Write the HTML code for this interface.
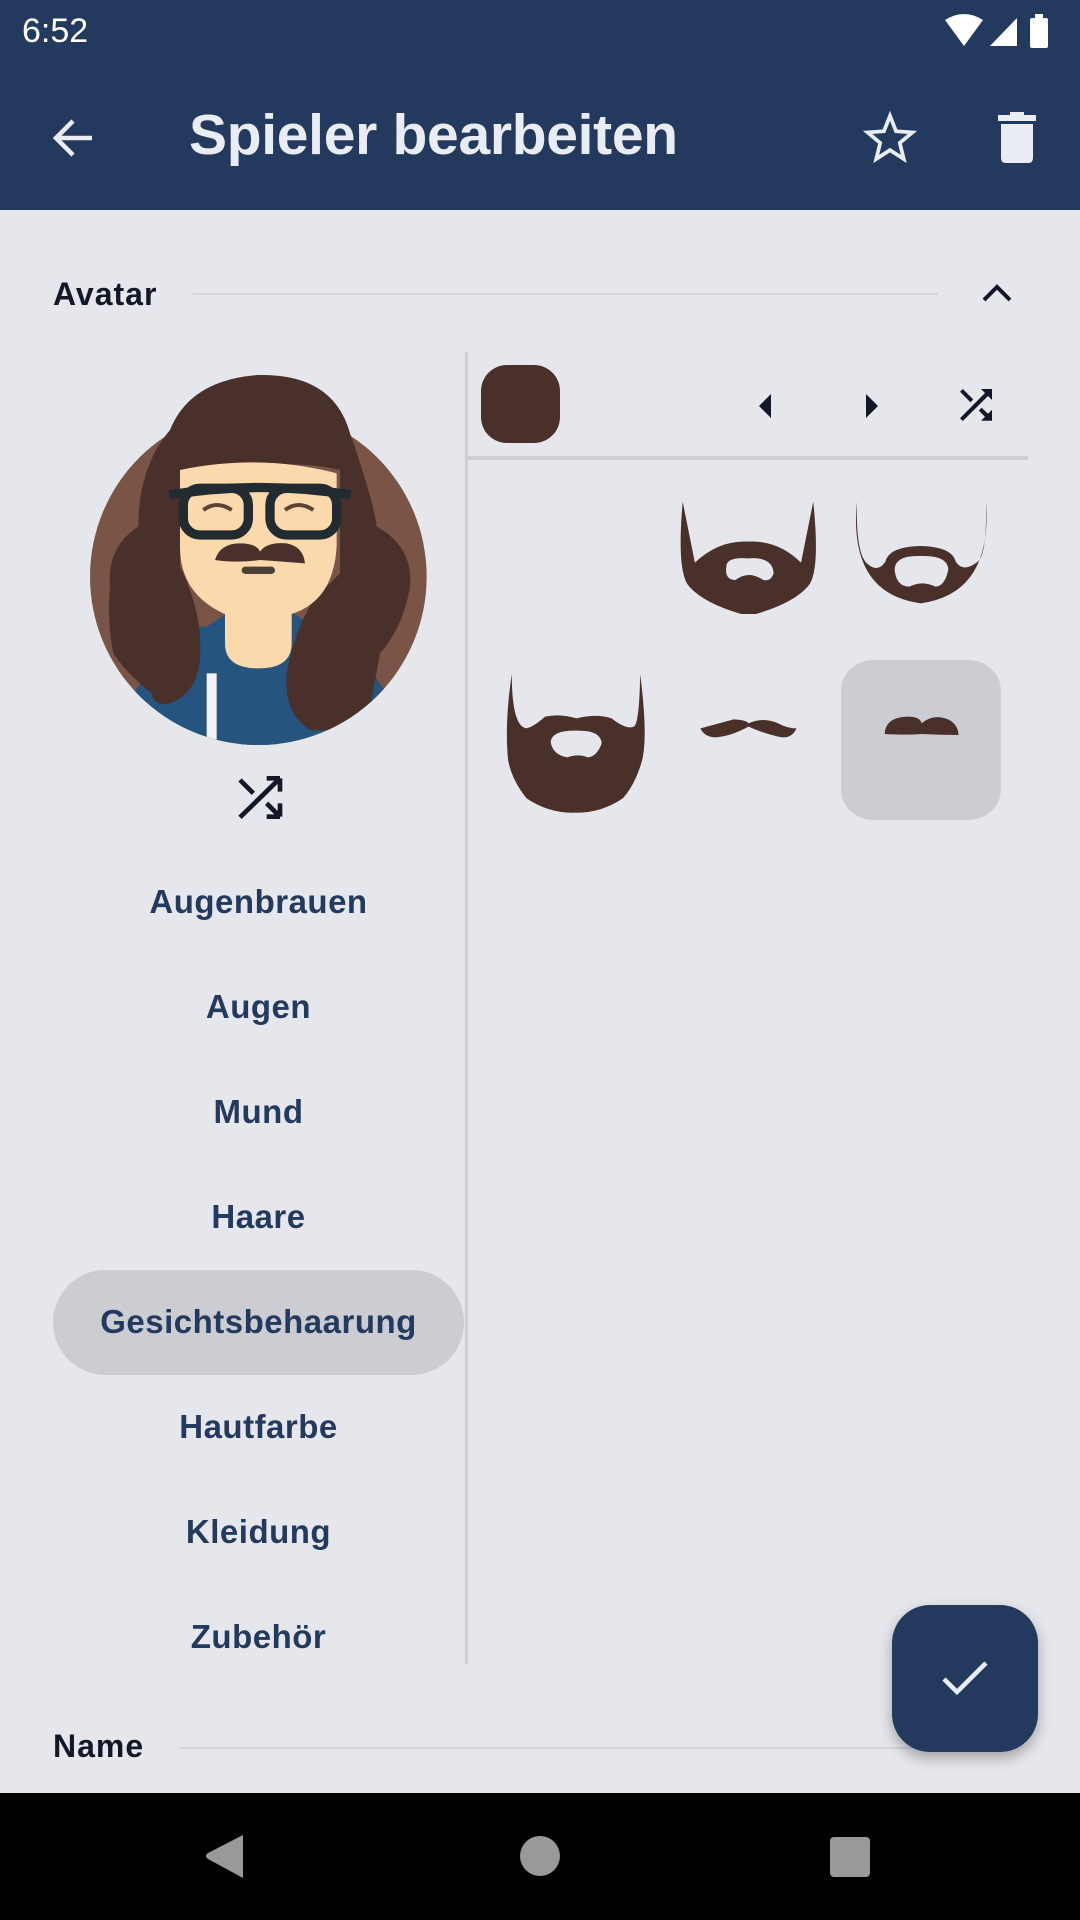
<!DOCTYPE html>
<html><head><meta charset="utf-8"><style>
*{margin:0;padding:0;box-sizing:border-box}
body{width:1080px;height:1920px;background:#e5e7ec;position:relative;overflow:hidden;font-family:"Liberation Sans",sans-serif}
.abs{position:absolute}
.item{position:absolute;left:53px;width:411px;text-align:center;font-weight:bold;font-size:33px;color:#233a5e;line-height:40px;letter-spacing:0.5px}
</style></head><body>
<div class="abs" style="left:0;top:0;width:1080px;height:210px;background:#233a5e"></div>
<div class="abs" style="left:22px;top:12px;font-size:34px;color:#fff;">6:52</div>
<svg class="abs" style="left:940px;top:12px" width="125" height="40" viewBox="0 0 125 40">
<path d="M5 8 Q24 -4 43 8 L24 34 Z" fill="#fff"/>
<path d="M50 34 L77 6 L77 34 Z" fill="#fff"/>
<rect x="90" y="6" width="18" height="30" rx="2" fill="#fff"/><rect x="95" y="2" width="8" height="5" fill="#fff"/>
</svg>
<svg class="abs" style="left:50px;top:115px" width="46" height="46" viewBox="0 0 46 46"><path d="M42 23H8M23 6L6 23l17 17" stroke="#e9ecf2" stroke-width="4.5" fill="none"/></svg>
<div class="abs" style="left:189px;top:100px;font-size:57px;font-weight:bold;color:#e9ecf2;letter-spacing:-0.3px;line-height:70px">Spieler bearbeiten</div>
<svg class="abs" style="left:862px;top:110px" width="56" height="56" viewBox="0 0 24 24"><path d="M12 2.5l2.6 6.6 7 .5-5.4 4.5 1.7 6.9L12 17.2 6.1 21l1.7-6.9L2.4 9.6l7-.5z" fill="none" stroke="#e9ecf2" stroke-width="1.6"/></svg>
<svg class="abs" style="left:995px;top:112px" width="44" height="52" viewBox="0 0 44 52"><rect x="3" y="3" width="38" height="6" fill="#e9ecf2"/><rect x="15" y="0" width="14" height="5" fill="#e9ecf2"/><path d="M6 12h32v34q0 5-5 5H11q-5 0-5-5z" fill="#e9ecf2"/></svg>

<div class="abs" style="left:53px;top:276px;font-size:32px;font-weight:bold;color:#111827;letter-spacing:1px">Avatar</div>
<div class="abs" style="left:193px;top:293px;width:745px;height:2px;background:#d4d6db"></div>
<svg class="abs" style="left:980px;top:280px" width="34" height="24" viewBox="0 0 34 24"><path d="M4 20L17 7l13 13" stroke="#111827" stroke-width="4" fill="none"/></svg>

<div class="abs" style="left:465px;top:352px;width:3px;height:1312px;background:#cdcfd4"></div>
<div class="abs" style="left:467px;top:456px;width:561px;height:4px;background:#cdcfd4"></div>
<div class="abs" style="left:481px;top:365px;width:79px;height:78px;border-radius:26px;background:#4a302b"></div>
<svg class="abs" style="left:755px;top:392px" width="20" height="28"><path d="M16 2L4 14l12 12z" fill="#111827"/></svg>
<svg class="abs" style="left:862px;top:392px" width="20" height="28"><path d="M4 2l12 12L4 26z" fill="#111827"/></svg>
<svg class="abs" style="left:952px;top:381px" width="48" height="48" viewBox="0 0 24 24"><path d="M10.6 9.2L5.4 4 4 5.4l5.2 5.2zM14.5 4l2 2L4 18.6 5.4 20 18 7.5l2 2V4zm.3 9.4l-1.4 1.4 3.1 3.1-2 2H20v-5.5l-2 2z" fill="#111827"/></svg>

<svg class="abs" style="left:460px;top:340px" width="580" height="500" viewBox="0 0 1568 1500" preserveAspectRatio="none">
<rect x="1030" y="960" width="432" height="480" rx="90" fill="#cbcdd2"/>
<g fill="#4a302b">
<path fill-rule="evenodd" d="M602 485L635 668Q700 600 780 605Q860 600 922 668L955 485Q975 700 940 740Q900 790 800 822L760 822Q660 790 620 740Q585 700 602 485ZM720 680Q720 650 780 655Q845 650 848 700Q840 725 820 720Q780 690 745 720Q715 720 720 680Z"/>
<path fill-rule="evenodd" d="M1073 485Q1070 640 1100 670Q1130 700 1150 665Q1160 620 1245 618Q1330 620 1340 665Q1360 700 1400 665Q1425 640 1422 485Q1440 760 1245 790Q1050 760 1073 485ZM1175 690Q1175 645 1245 648Q1320 645 1320 690Q1310 740 1285 740Q1250 720 1215 740Q1180 740 1175 690Z"/>
<path fill-rule="evenodd" d="M140 1002Q140 1160 180 1165Q200 1160 230 1130Q270 1120 315 1135Q370 1120 410 1135Q450 1170 470 1160Q485 1150 487 1002Q510 1200 490 1270Q470 1340 440 1375Q380 1420 310 1418Q240 1420 180 1375Q140 1320 130 1260Q120 1150 140 1002ZM245 1205Q250 1170 315 1172Q380 1170 383 1210Q370 1250 345 1252Q320 1240 290 1252Q250 1245 245 1205Z"/>
<path d="M650 1165Q700 1150 740 1138Q775 1140 780 1150Q820 1130 860 1150Q885 1165 910 1165Q895 1200 860 1190Q820 1180 780 1160Q730 1190 690 1192Q660 1190 650 1165Z"/>
<path d="M1148 1182Q1150 1130 1215 1130Q1245 1132 1248 1150Q1270 1128 1300 1132Q1345 1140 1348 1185Q1300 1185 1250 1182Q1200 1186 1148 1182Z"/>
</g></svg>

<svg class="abs" style="left:80px;top:360px" width="360" height="460" viewBox="0 0 1080 1380">
<defs><clipPath id="c"><circle cx="535" cy="650" r="505"/><rect x="150" y="40" width="760" height="500"/></clipPath></defs>
<circle cx="535" cy="650" r="505" fill="#7a5446"/>
<g clip-path="url(#c)">
<path d="M300 800 L380 800 L440 760 L640 760 L700 800 L780 800 L920 1000 L920 1200 L160 1200 L160 1000Z" fill="#25557e"/>
<path d="M435 680 H635 V850 Q635 925 535 925 Q435 925 435 850Z" fill="#fcd9ac"/>
<rect x="380" y="940" width="30" height="260" fill="#f2f2f2"/>
<path d="M535 45Q760 40 810 220Q880 420 890 500Q1000 560 990 680Q970 800 900 880Q880 990 870 1050Q820 1120 690 1110Q610 1060 620 940Q640 820 700 720L780 640L780 330Q620 290 300 340L300 620Q370 760 360 900Q350 1000 270 1030Q220 1040 215 1000Q140 940 100 880Q80 780 90 680Q80 560 175 500Q175 320 270 210Q330 60 535 45Z" fill="#4a302b"/>
<path d="M300 330Q540 280 770 340L770 560Q760 720 640 760Q535 800 430 760Q300 700 300 560Z" fill="#fcd9ac"/>
<g fill="none" stroke="#222b30" stroke-width="28"><rect x="310" y="385" width="195" height="140" rx="50"/><rect x="570" y="385" width="200" height="140" rx="50"/><path d="M268 405Q540 360 812 405"/></g>
<path d="M370 450Q410 420 455 450M615 450Q655 420 700 450" stroke="#5a4535" stroke-width="12" fill="none"/>
<path d="M405 600Q420 550 480 550Q530 550 540 575Q560 545 620 550Q670 560 675 610Q610 605 540 600Q470 610 405 600Z" fill="#4a302b"/>
<rect x="485" y="620" width="100" height="22" rx="11" fill="#4a4035"/>
</g>
<path d="M480 1260l40 40M600 1255L480 1372M600 1255v40M600 1255h-40M560 1330l40 40M600 1370v-40M600 1370h-40" stroke="#111827" stroke-width="14" fill="none"/>
</svg>

<div class="abs" style="left:53px;top:1270px;width:411px;height:105px;border-radius:53px;background:#cbcdd2"></div>
<div class="item" style="top:882px">Augenbrauen</div>
<div class="item" style="top:987px">Augen</div>
<div class="item" style="top:1092px">Mund</div>
<div class="item" style="top:1197px">Haare</div>
<div class="item" style="top:1302px">Gesichtsbehaarung</div>
<div class="item" style="top:1407px">Hautfarbe</div>
<div class="item" style="top:1512px">Kleidung</div>
<div class="item" style="top:1617px">Zubehör</div>

<div class="abs" style="left:53px;top:1728px;font-size:32px;font-weight:bold;color:#111827;letter-spacing:1px">Name</div>
<div class="abs" style="left:179px;top:1747px;width:770px;height:2px;background:#d4d6db"></div>
<div class="abs" style="left:892px;top:1605px;width:146px;height:147px;border-radius:38px;background:#233a5e;box-shadow:0 6px 14px rgba(0,0,0,0.3)"></div>
<svg class="abs" style="left:938px;top:1655px" width="54" height="46" viewBox="0 0 54 46"><path d="M6 24l13 13L48 8" stroke="#e9ecf2" stroke-width="4.5" fill="none"/></svg>

<div class="abs" style="left:0;top:1793px;width:1080px;height:127px;background:#000"></div>
<svg class="abs" style="left:200px;top:1832px" width="50" height="50"><path d="M43 3V46L8 27Q4 24 8 21Z" fill="#999"/></svg>
<div class="abs" style="left:520px;top:1836px;width:40px;height:40px;border-radius:50%;background:#999"></div>
<div class="abs" style="left:830px;top:1837px;width:40px;height:40px;border-radius:4px;background:#999"></div>
</body></html>
